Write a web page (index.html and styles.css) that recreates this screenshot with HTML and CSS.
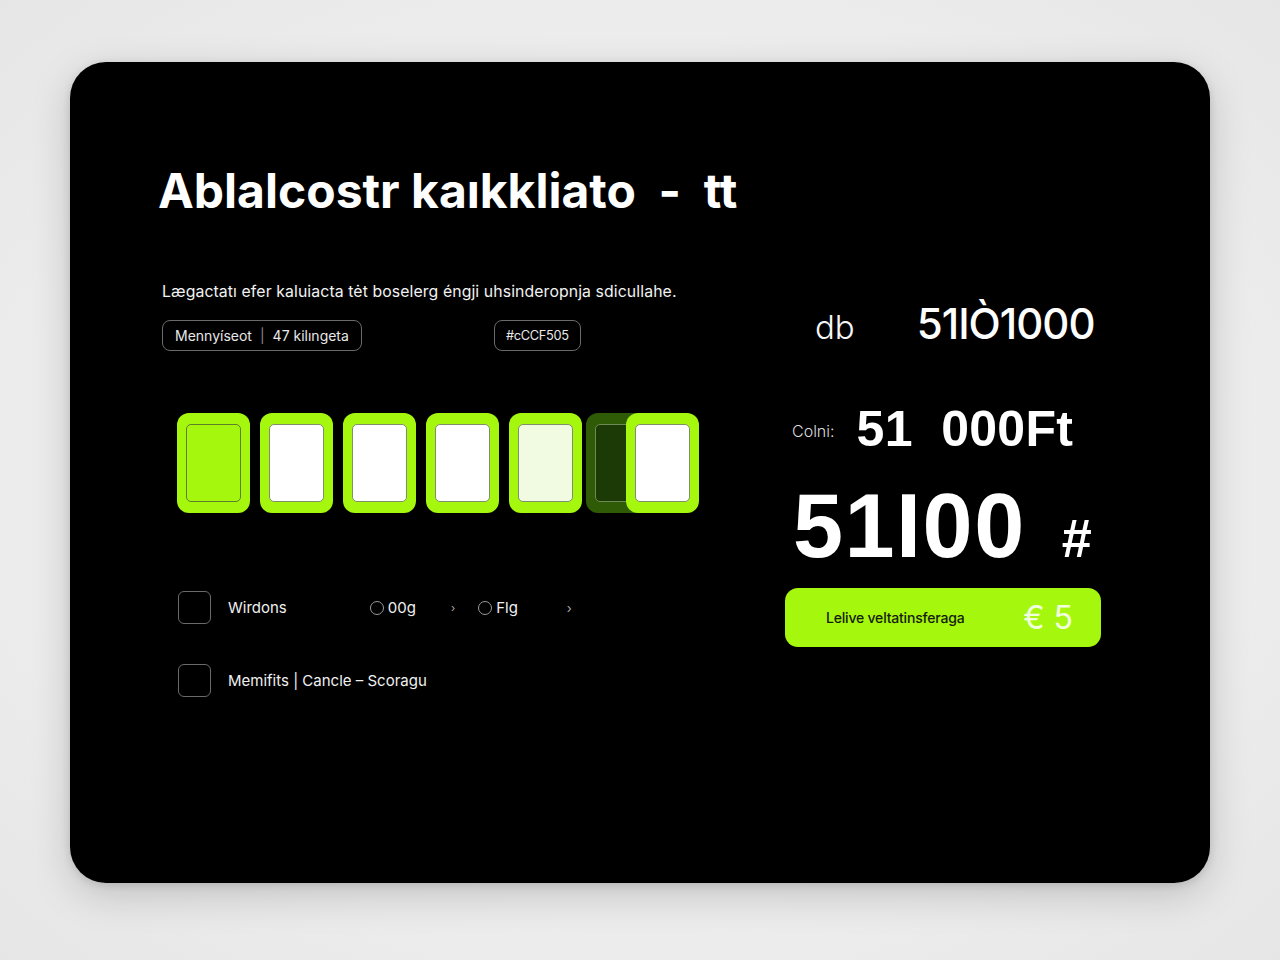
FILE: index.html
```html
<!DOCTYPE html>
<html lang="hu">
<head>
<meta charset="utf-8">
<title>Kalkulátor</title>
<link rel="stylesheet" href="styles.css">
</head>
<body>
<main class="card">
  <h1 class="title">Ablalcostr kaıkkliato&nbsp; - &nbsp;tt</h1>
  <div class="content">
    <section class="left">
      <p class="desc">Lægactatı efer kaluiacta tėt boselerg éngji uhsinderopnja sdicullahe.</p>
      <div class="pills">
        <span class="pill">Mennyíseot <span class="sep">|</span> 47 kilıngeta</span>
        <span class="pill pill-code">#cCCF505</span>
      </div>
      <div class="tiles">
        <div class="tile tile-full"><span class="inner"></span></div>
        <div class="tile"><span class="inner"></span></div>
        <div class="tile"><span class="inner"></span></div>
        <div class="tile"><span class="inner"></span></div>
        <div class="tile tile-pale"><span class="inner"></span></div>
        <div class="tile tile-dark"><span class="inner"></span></div>
        <div class="tile tile-over"><span class="inner"></span></div>
      </div>
      <div class="opt-row">
        <span class="check"></span>
        <span class="opt-label">Wirdons</span>
        <span class="radio-group">
          <span class="radio"></span><span class="r-label">00g</span>
          <span class="chev small">›</span>
          <span class="radio"></span><span class="r-label">Flg</span>
          <span class="chev">›</span>
        </span>
      </div>
      <div class="opt-row">
        <span class="check"></span>
        <span class="opt-label">Memifits | Cancle – Scoragu</span>
      </div>
    </section>
    <section class="right">
      <div class="row-db">
        <span class="db">db</span>
        <span class="db-val">51IÒ1000</span>
      </div>
      <div class="row-total">
        <span class="total-label">Colni:</span>
        <span class="total-val">51&nbsp; 000Ft</span>
      </div>
      <div class="row-big">
        <span class="big">51I00</span>
        <span class="hash">#</span>
      </div>
      <button class="cta">
        <span class="cta-text">Lelive veltatinsferaga</span>
        <span class="cta-amt">€ 5</span>
      </button>
    </section>
  </div>
</main>
</body>
</html>
```
FILE: styles.css
```css
* { box-sizing: border-box; }
html, body { margin: 0; padding: 0; }
body {
  width: 1280px;
  height: 960px;
  background: radial-gradient(ellipse at center, #f4f4f4 0%, #ececec 70%, #e6e6e6 100%);
  font-family: Inter, "Noto Sans", "Liberation Sans", sans-serif;
  color: #fff;
  overflow: hidden;
  padding-top: 62px;
}
.card {
  width: 1140px;
  height: 821px;
  margin: 0 auto;
  background: #000;
  border-radius: 36px;
  box-shadow: 0 12px 40px rgba(0,0,0,0.18), 0 2px 8px rgba(0,0,0,0.12);
  padding: 99px 88px 0 88px;
}
.title {
  margin: 0;
  font-size: 48px;
  font-weight: 700;
  line-height: 60px;
  letter-spacing: 0;
  color: #fff;
}
.content {
  display: flex;
  margin-top: 59px;
}
.left {
  width: 627px;
  padding-left: 4px;
}
.desc {
  margin: 0;
  font-size: 15.8px;
  line-height: 24px;
  color: #f2f2f2;
  letter-spacing: 0.1px;
}
.pills {
  display: flex;
  gap: 132px;
  margin-top: 16px;
}
.pill {
  display: inline-flex;
  align-items: center;
  height: 31px;
  padding: 0 12px;
  border: 1px solid #6b6b6b;
  border-radius: 8px;
  font-size: 14px;
  color: #e8e8e8;
}
.pill .sep { color: #888; margin: 0 8px; }
.pill-code { padding: 0 11px; font-size: 12.8px; letter-spacing: -0.3px; }
.tiles {
  display: flex;
  margin-top: 62px;
  margin-left: 15px;
  gap: 10px;
}
.tile {
  width: 73px;
  height: 100px;
  border-radius: 12px;
  background: #a6f70e;
  padding: 11px 9px;
  flex: none;
}
.tile .inner {
  display: block;
  width: 100%;
  height: 100%;
  background: #fff;
  border: 1px solid #7f8f6a;
  border-radius: 5px;
}
.tile-full .inner { background: #a6f70e; border-color: #5f7f2a; }
.tile-pale .inner { background: #f1fbe1; }
.tile-dark { background: #2f5a06; margin-left: -6px; }
.tile-dark .inner { background: #1c3a05; border-color: #6e8a55; }
.tile-over { margin-left: -43px; position: relative; }
.opt-row {
  display: flex;
  align-items: center;
  margin-left: 16px;
  height: 33px;
}
.tiles + .opt-row { margin-top: 78px; }
.opt-row + .opt-row { margin-top: 40px; }
.check {
  width: 33px;
  height: 33px;
  border: 1px solid #6a6a6a;
  border-radius: 6px;
  flex: none;
}
.opt-label {
  margin-left: 17px;
  font-size: 15px;
  color: #f0f0f0;
}
.radio-group {
  display: flex;
  align-items: center;
  margin-left: 83px;
  font-size: 15px;
  color: #f0f0f0;
}
.radio {
  width: 14px;
  height: 14px;
  border: 1px solid #9a9a9a;
  border-radius: 50%;
  margin-right: 4px;
}
.chev { color: #aaa; font-size: 13px; margin: 0 0 0 49px; }
.chev.small { margin: 0 23px 0 35px; font-size: 11px; }
.right {
  width: 330px;
  padding-top: 18px;
}
.row-db {
  display: flex;
  align-items: baseline;
  height: 50px;
}
.db {
  margin-left: 30px;
  font-size: 33px;
  font-weight: 300;
  color: #f5f5f5;
}
.db-val {
  margin-left: 62px;
  font-size: 42px;
  font-weight: 500;
  letter-spacing: -1px;
}
.row-total {
  display: flex;
  align-items: center;
  margin-top: 53px;
}
.total-label {
  margin-left: 7px;
  margin-top: 4px;
  font-size: 16px;
  font-weight: 300;
  color: #ddd;
}
.total-val {
  margin-left: 22px;
  font-family: "Liberation Sans", Arial, sans-serif;
  font-size: 50px;
  font-weight: 700;
  letter-spacing: 0.3px;
  line-height: 56px;
}
.row-big {
  display: flex;
  align-items: baseline;
  margin-top: 21px;
}
.big {
  margin-left: 8px;
  font-family: "Liberation Sans", Arial, sans-serif;
  font-size: 90px;
  font-weight: 700;
  letter-spacing: 1.5px;
  line-height: 96px;
}
.hash {
  margin-left: 36px;
  font-family: "Liberation Sans", Arial, sans-serif;
  font-size: 54px;
  font-weight: 700;
}
.cta {
  display: flex;
  align-items: center;
  justify-content: space-between;
  width: 316px;
  height: 59px;
  margin-top: 14px;
  border: none;
  border-radius: 13px;
  background: #a6f70e;
  padding: 0 28px 0 41px;
  font-family: Inter, "Noto Sans", sans-serif;
  cursor: pointer;
}
.cta-text {
  font-size: 14px;
  font-weight: 500;
  color: #14200a;
  letter-spacing: -0.2px;
}
.cta-amt {
  font-size: 32px;
  font-weight: 400;
  color: #f2ffe0;
}
```
